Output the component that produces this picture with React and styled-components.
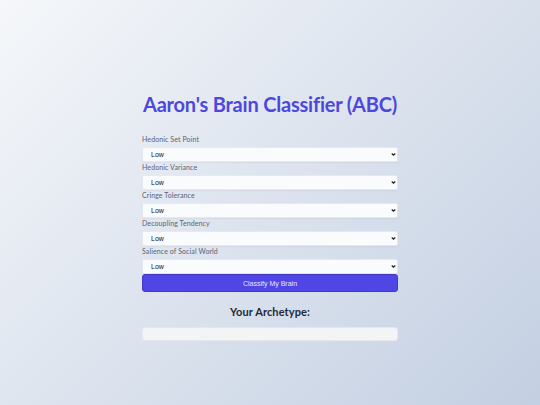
import React, { useState } from "react";
import styled, { createGlobalStyle } from "styled-components";

const GlobalStyle = createGlobalStyle`
  html, body {
    margin: 0;
    padding: 0;
  }
  body {
    min-height: 100vh;
    background: linear-gradient(135deg, #f5f7fa 0%, #c3cfe2 100%);
    font-family: "Lato", "Liberation Sans", sans-serif;
  }
`;

const Page = styled.div`
  min-height: 100vh;
  box-sizing: border-box;
  padding-top: 92px;
  display: flex;
  justify-content: center;
`;

const Card = styled.div`
  width: 256px;
  display: flex;
  flex-direction: column;
`;

const Title = styled.h1`
  margin: 0 0 18px;
  font-family: "Lato", sans-serif;
  font-size: 20px;
  line-height: 24px;
  font-weight: 700;
  letter-spacing: -0.2px;
  color: #4e47de;
  text-align: center;
  white-space: nowrap;
`;

const Form = styled.form`
  display: flex;
  flex-direction: column;
`;

const Field = styled.div`
  display: flex;
  flex-direction: column;
`;

const Label = styled.label`
  display: block;
  font-family: "Lato", sans-serif;
  font-size: 7px;
  line-height: 10px;
  letter-spacing: 0.1px;
  color: #5b6170;
  margin-bottom: 3px;
`;

const SelectWrap = styled.div`
  position: relative;
  height: 15px;
`;

const Select = styled.select`
  appearance: none;
  -webkit-appearance: none;
  display: block;
  height: 15px;
  width: 100%;
  box-sizing: border-box;
  padding: 0 12px 0 8px;
  border: 1px solid #e6e9ef;
  border-radius: 2px;
  background: #fafbfc;
  box-shadow: 0 1px 2px rgba(0, 0, 0, 0.05);
  font-family: "Liberation Sans", Arial, sans-serif;
  font-size: 7px;
  color: #111;
  outline: none;
`;

const Chevron = styled.svg`
  position: absolute;
  right: 2px;
  top: 5px;
  width: 5px;
  height: 5px;
  pointer-events: none;
`;

const Button = styled.button`
  height: 18px;
  width: 100%;
  border: 1px solid #4338ca;
  border-radius: 3px;
  background: #4f46e5;
  color: #e8e8ff;
  font-family: "Liberation Sans", Arial, sans-serif;
  font-size: 7px;
  cursor: pointer;
  padding: 0;
`;

const ResultHeading = styled.h2`
  margin: 13px 0 8px;
  font-family: "Lato", sans-serif;
  font-size: 11px;
  line-height: 14px;
  font-weight: 700;
  letter-spacing: 0.1px;
  color: #1f2937;
  text-align: center;
`;

const ResultBox = styled.div`
  height: 14px;
  box-sizing: border-box;
  border: 1px solid #e5e7eb;
  border-radius: 3px;
  background: #f3f4f6;
  font-size: 8px;
  color: #374151;
  text-align: center;
`;

const traits = [
  "Hedonic Set Point",
  "Hedonic Variance",
  "Cringe Tolerance",
  "Decoupling Tendency",
  "Salience of Social World",
];

export default function App() {
  const [values, setValues] = useState(traits.map(() => "low"));
  const [result, setResult] = useState("");

  const update = (i, v) => {
    setValues((prev) => {
      const next = [...prev];
      next[i] = v;
      return next;
    });
  };

  return (
    <>
      <GlobalStyle />
      <Page>
        <Card>
          <Title>Aaron's Brain Classifier (ABC)</Title>
          <Form onSubmit={(e) => e.preventDefault()}>
            {traits.map((t, i) => (
              <Field key={t}>
                <Label>{t}</Label>
                <SelectWrap>
                  <Select value={values[i]} onChange={(e) => update(i, e.target.value)}>
                    <option value="low">Low</option>
                    <option value="medium">Medium</option>
                    <option value="high">High</option>
                  </Select>
                  <Chevron viewBox="0 0 10 10">
                    <path d="M1.5 3 L5 6.5 L8.5 3" fill="none" stroke="#222" strokeWidth="2.4" />
                  </Chevron>
                </SelectWrap>
              </Field>
            ))}
            <Button type="button" onClick={() => setResult("")}>
              Classify My Brain
            </Button>
          </Form>
          <ResultHeading>Your Archetype:</ResultHeading>
          <ResultBox>{result}</ResultBox>
        </Card>
      </Page>
    </>
  );
}
